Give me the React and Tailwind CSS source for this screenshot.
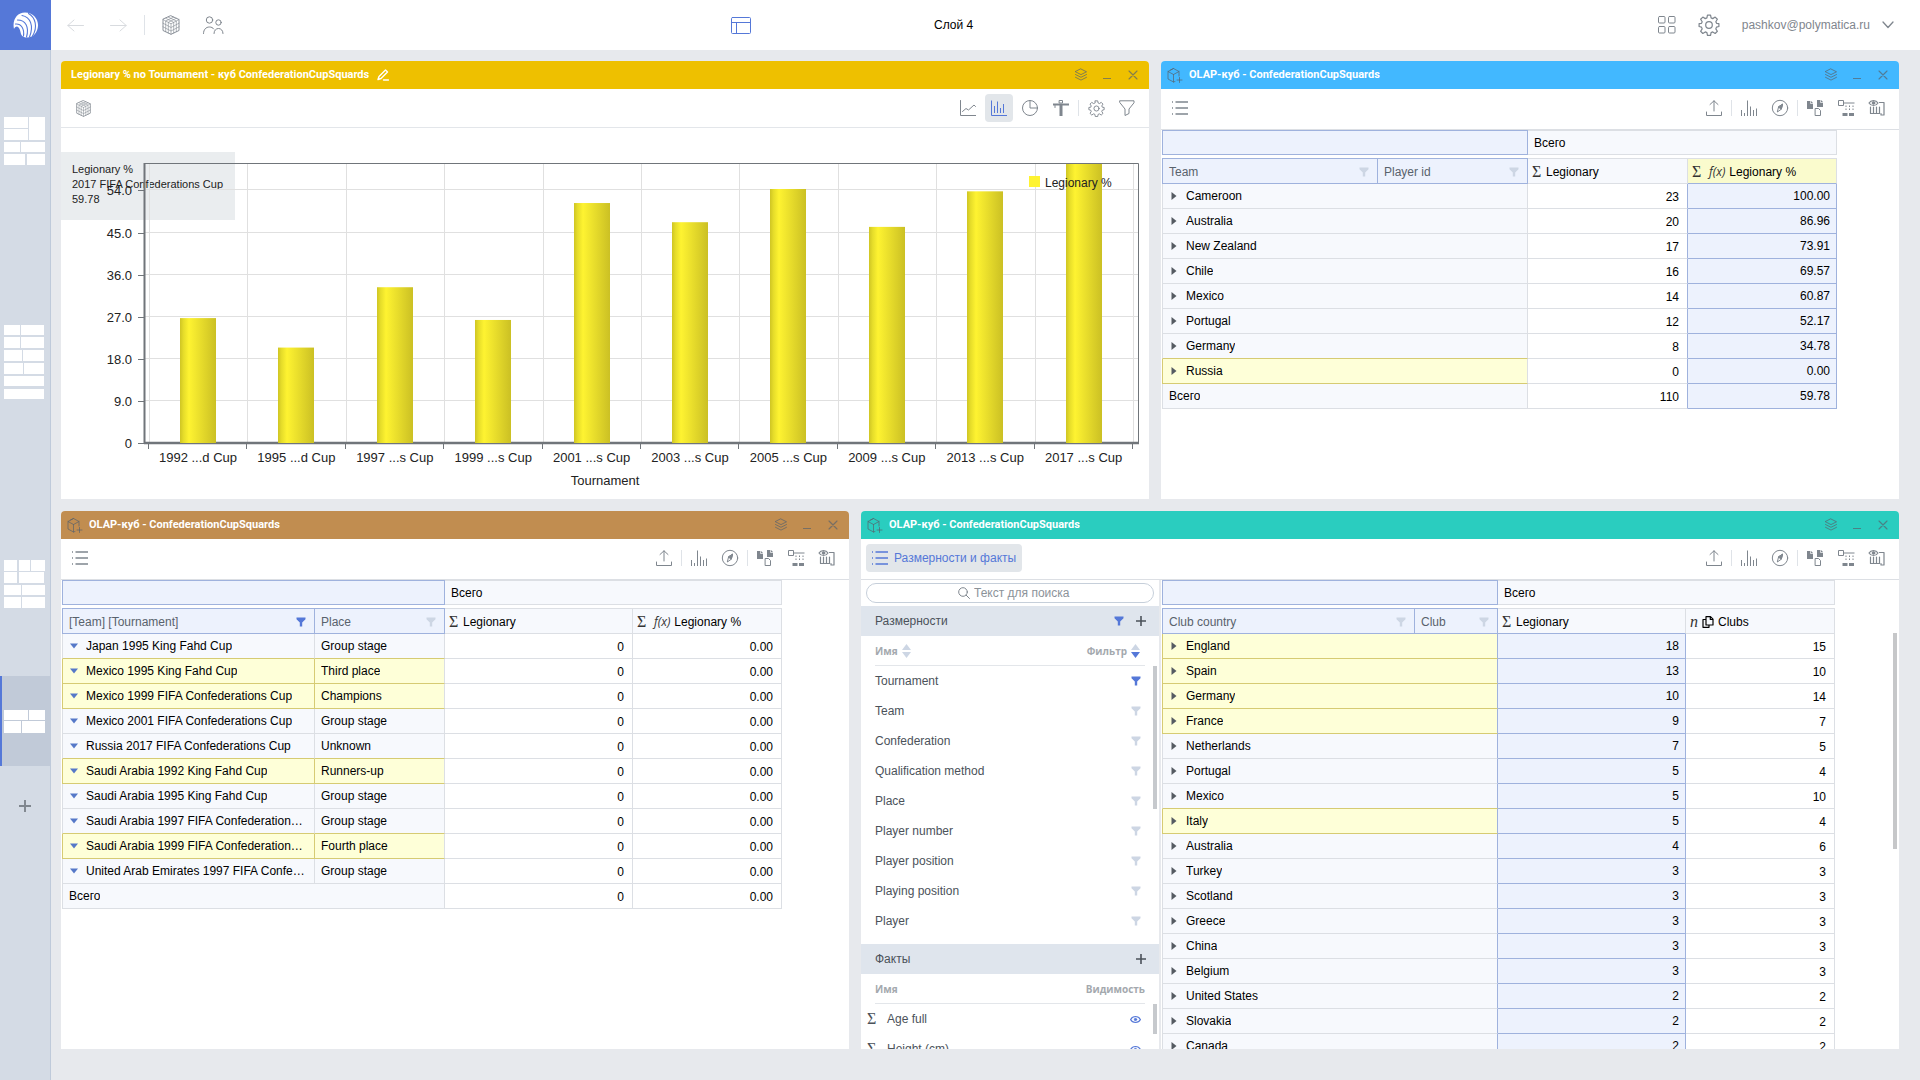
import { useState } from 'react'
import clsx from 'clsx'

const bars = [
  { label: '1992 ...d Cup', value: 26.7 },
  { label: '1995 ...d Cup', value: 20.4 },
  { label: '1997 ...s Cup', value: 33.3 },
  { label: '1999 ...s Cup', value: 26.3 },
  { label: '2001 ...s Cup', value: 51.3 },
  { label: '2003 ...s Cup', value: 47.2 },
  { label: '2005 ...s Cup', value: 54.3 },
  { label: '2009 ...s Cup', value: 46.2 },
  { label: '2013 ...s Cup', value: 53.8 },
  { label: '2017 ...s Cup', value: 59.78 },
]

const teamTable = {
  width: 'w-[675px]',
  cols: ['w-[216px]', 'w-[150px]', 'w-[160px]', 'w-[149px]'],
  dims: [{ label: 'Team' }, { label: 'Player id' }],
  facts: [
    { label: 'Legionary', kind: 'sum' },
    { label: 'Legionary %', kind: 'fx', selected: true, marked: true },
  ],
  rows: [
    { names: ['Cameroon'], values: ['23', '100.00'] },
    { names: ['Australia'], values: ['20', '86.96'] },
    { names: ['New Zealand'], values: ['17', '73.91'] },
    { names: ['Chile'], values: ['16', '69.57'] },
    { names: ['Mexico'], values: ['14', '60.87'] },
    { names: ['Portugal'], values: ['12', '52.17'] },
    { names: ['Germany'], values: ['8', '34.78'] },
    { names: ['Russia'], values: ['0', '0.00'], marked: true },
    { names: ['Всего'], values: ['110', '59.78'], total: true },
  ],
}

const placeTable = {
  open: true,
  width: 'w-[720px]',
  cols: ['w-[253px]', 'w-[130px]', 'w-[188px]', 'w-[149px]'],
  dims: [{ label: '[Team] [Tournament]', filtered: true }, { label: 'Place' }],
  facts: [
    { label: 'Legionary', kind: 'sum' },
    { label: 'Legionary %', kind: 'fx' },
  ],
  rows: [
    { names: ['Japan 1995 King Fahd Cup', 'Group stage'] },
    { names: ['Mexico 1995 King Fahd Cup', 'Third place'], marked: true },
    { names: ['Mexico 1999 FIFA Confederations Cup', 'Champions'], marked: true },
    { names: ['Mexico 2001 FIFA Confederations Cup', 'Group stage'] },
    { names: ['Russia 2017 FIFA Confederations Cup', 'Unknown'] },
    { names: ['Saudi Arabia 1992 King Fahd Cup', 'Runners-up'], marked: true },
    { names: ['Saudi Arabia 1995 King Fahd Cup', 'Group stage'] },
    { names: ['Saudi Arabia 1997 FIFA Confederations Cup', 'Group stage'] },
    { names: ['Saudi Arabia 1999 FIFA Confederations Cup', 'Fourth place'], marked: true },
    { names: ['United Arab Emirates 1997 FIFA Confederations Cup', 'Group stage'] },
    { names: ['Всего'], total: true },
  ].map((row) => ({ ...row, values: ['0', '0.00'] })),
}

const clubTable = {
  width: 'w-[673px]',
  cols: ['w-[253px]', 'w-[83px]', 'w-[188px]', 'w-[149px]'],
  dims: [{ label: 'Club country' }, { label: 'Club' }],
  facts: [
    { label: 'Legionary', kind: 'sum', selected: true },
    { label: 'Clubs', kind: 'count' },
  ],
  rows: [
    { names: ['England'], values: ['18', '15'], marked: true },
    { names: ['Spain'], values: ['13', '10'], marked: true },
    { names: ['Germany'], values: ['10', '14'], marked: true },
    { names: ['France'], values: ['9', '7'], marked: true },
    { names: ['Netherlands'], values: ['7', '5'] },
    { names: ['Portugal'], values: ['5', '4'] },
    { names: ['Mexico'], values: ['5', '10'] },
    { names: ['Italy'], values: ['5', '4'], marked: true },
    { names: ['Australia'], values: ['4', '6'] },
    { names: ['Turkey'], values: ['3', '3'] },
    { names: ['Scotland'], values: ['3', '3'] },
    { names: ['Greece'], values: ['3', '3'] },
    { names: ['China'], values: ['3', '3'] },
    { names: ['Belgium'], values: ['3', '3'] },
    { names: ['United States'], values: ['2', '2'] },
    { names: ['Slovakia'], values: ['2', '2'] },
    { names: ['Canada'], values: ['2', '2'] },
  ],
}

const dimensions = [
  'Tournament',
  'Team',
  'Confederation',
  'Qualification method',
  'Place',
  'Player number',
  'Player position',
  'Playing position',
  'Player',
]

// Each block is [x, y, width, height] inside the layer thumbnail
const layers = [
  {
    name: 'Слой 1',
    tile: 'h-[182px]',
    height: 49,
    blocks: [[0, 0, 24, 11], [0, 12, 24, 11], [25, 0, 16, 23], [0, 25, 16, 10], [17, 25, 24, 10], [0, 37, 21, 11], [23, 37, 18, 11]],
  },
  {
    name: 'Слой 2',
    tile: 'h-[260px]',
    height: 74,
    blocks: [[0, 0, 16, 10], [17, 0, 23, 10], [0, 12, 16, 11], [17, 12, 23, 11], [0, 25, 18, 11], [19, 25, 21, 11], [0, 38, 19, 11], [20, 38, 20, 11], [0, 51, 40, 10], [0, 64, 40, 10]],
  },
  {
    name: 'Слой 3',
    tile: 'h-[184px]',
    height: 48,
    blocks: [[0, 0, 13, 11], [15, 0, 11, 11], [27, 0, 14, 11], [0, 12, 13, 11], [15, 12, 25, 11], [0, 25, 17, 10], [18, 25, 23, 10], [0, 37, 17, 11], [18, 37, 23, 11]],
  },
  {
    name: 'Слой 4',
    tile: 'h-[90px]',
    height: 23,
    blocks: [[0, 0, 24, 10], [25, 0, 16, 10], [0, 11, 17, 12], [18, 11, 23, 12]],
  },
]

function Svg({ size = 16, box = 16, className, children }) {
  return (
    <svg
      width={size}
      height={size}
      viewBox={`0 0 ${box} ${box}`}
      fill="none"
      stroke="currentColor"
      strokeLinecap="round"
      strokeLinejoin="round"
      className={clsx('shrink-0', className)}
      aria-hidden="true"
    >
      {children}
    </svg>
  )
}

function LogoIcon() {
  return (
    <Svg size={26} box={26}>
      <path d="M1 17C-1 8 4 .5 12 .5 20 .5 25.500 7 25 14c-.5 6-4 11.500-11 11.500C9.500 25.500 8 23 7.500 20 7 17 5.500 14.500 4 14.500 2.500 14.500 1.500 15.500 1 17Z" fill="#fff" stroke="none" />
      <path d="M19.500 24C25 15 22.500 5.500 15.500 1.500M16.500 25C21 14 17.500 5 9 3.500M13.500 25C16.500 15 12.500 8 4.500 8M10.500 24C11.500 17 8.500 11.500 2.500 12" stroke="#5578d8" strokeWidth="1.100" />
    </Svg>
  )
}

function CubeIcon({ size = 20 }) {
  return (
    <Svg size={size} box={20}>
      <path d="M10 .8 18 4.500v11L10 19.300 2 15.500v-11Z" strokeWidth=".9" />
      <path
        d="m2 4.500 8 4.300 8-4.300M10 8.800v10.500M12.700 2.100 4.700 6v10.700M15.300 3.300 7.300 7.300V18M7.300 2.100l8 3.900v10.700M4.700 3.300l8 4V18M2 8.200l8 4.300 8-4.300M2 11.800l8 4.200 8-4.200"
        strokeWidth=".6"
      />
    </Svg>
  )
}

function PeopleIcon() {
  return (
    <Svg size={22} box={22}>
      <circle cx="7.500" cy="6" r="3.200" />
      <circle cx="16.500" cy="8.500" r="2.700" />
      <path d="M1.500 19.500c0-4 2.500-6.500 6-6.500 1.800 0 3.300.7 4.300 2M12 19.500c0-3 2-5 4.500-5s4.500 2 4.500 5" />
    </Svg>
  )
}

function GearIcon({ size = 16 }) {
  return (
    <Svg size={size} box={20}>
      <circle cx="10" cy="10" r="3" strokeWidth="1.100" />
      <path
        d="M8.600 1h2.800l.5 2.500 1.500.7 2.200-1.400 2 2-1.400 2.200.7 1.500 2.100.3v2.600l-2.200.6-.6 1.500 1.400 2.200-2 2-2.200-1.400-1.500.6-.5 2.600H8.600l-.5-2.600-1.500-.6-2.200 1.400-2-2 1.400-2.200-.6-1.500L1 11.400V8.800l2.200-.3.6-1.500-1.400-2.200 2-2 2.200 1.400 1.500-.7Z"
        strokeWidth="1.100"
      />
    </Svg>
  )
}

function CubePlusIcon() {
  return (
    <Svg>
      <path d="M8 14.500 6.500 15 1 12V4.500l5.500-3 5.500 3V9M1 4.500l5.500 3 5.500-3M6.500 7.500V15M3.500 3l3-1.500M12.500 10.500v5M10 13h5" />
    </Svg>
  )
}

function StackIcon() {
  return (
    <Svg size={14} box={14}>
      <path d="m7 1 5.500 2.800L7 6.600 1.500 3.800ZM1.500 6.500 7 9.300l5.500-2.800M1.500 9.300 7 12.100l5.500-2.800" />
    </Svg>
  )
}

function CloseIcon() {
  return (
    <Svg size={12} box={12}>
      <path d="m2 2 8 8m0-8-8 8" strokeWidth="1.100" />
    </Svg>
  )
}

function MinimizeIcon() {
  return (
    <Svg size={12} box={12}>
      <path d="M2 9.500h8" strokeLinecap="butt" />
    </Svg>
  )
}

function ListIcon() {
  return (
    <Svg>
      <path d="M3.500 2h12.500M3.500 8h12.500M3.500 14h12.500M0 2h1M0 8h1M0 14h1" strokeWidth="1.500" strokeLinecap="butt" />
    </Svg>
  )
}

function UploadIcon() {
  return (
    <Svg>
      <path d="M8 11V.8M4 4.500 8 .8l4 3.700M.5 12v3.500h15V12" />
    </Svg>
  )
}

function ColumnsIcon() {
  return (
    <Svg size={18} box={18}>
      <path d="M1.500 17V11M4.500 17v-3M7.500 17V1.500M10.500 17V7.500M13.500 17v-6M16.500 17V9.500" strokeLinecap="butt" />
    </Svg>
  )
}

function CompassIcon() {
  return (
    <Svg size={18} box={18}>
      <circle cx="9" cy="9" r="7.700" />
      <path d="m11.500 5.500-1.200 4.700-4 2.800 1.200-4.800Z" />
      <path d="m11.500 5.500-1.200 4.700-2.800-2Z" fill="currentColor" />
    </Svg>
  )
}

function DocsIcon() {
  return (
    <Svg size={18} box={18}>
      <path d="M1 2h4l2 2v6H1ZM11 1h4l2 2v5h-6Z" fill="currentColor" stroke="none" />
      <path d="M9.500 9.500h3l2 2v5h-5Z" />
      <path d="M4.500 2.500v2H7M14.500 1.500v2H17" stroke="#fff" strokeWidth=".7" />
    </Svg>
  )
}

function TreeIcon() {
  return (
    <Svg size={18} box={18}>
      <path d="M1.500 1.500h5v5h-5ZM6.500 4h11" strokeLinecap="butt" />
      <path d="M9 6.500v6M12.500 6.500v6M16 6.500v6" strokeDasharray="1.500 1.500" strokeLinecap="butt" />
      <path d="M5.500 14h5v3h-5ZM12 14h5v3h-5Z" fill="currentColor" stroke="none" />
    </Svg>
  )
}

function EyeColumnsIcon() {
  return (
    <Svg size={18} box={18}>
      <path d="M1 4c2-3.300 7-3.300 9 0-2 3.300-7 3.300-9 0Z" strokeWidth="1.200" />
      <circle cx="5.500" cy="4" r="1.300" fill="currentColor" />
      <path d="M2.500 8v6.500h9V8M5.500 8v6.500M8.500 8v6.500M11.500 3.500h4.500v12.500h-3V14.500" strokeWidth="1.200" />
    </Svg>
  )
}

function LineChartIcon() {
  return (
    <Svg>
      <path d="M.5.500v15H16M2.500 11.500 6 8.500l2.500 1.500L14 5l1.500 1.500" />
    </Svg>
  )
}

function BarChartIcon() {
  return (
    <Svg>
      <path d="M.5.500v15H16M3.500 13V6M6.500 13V1.500M9.500 13V8M12.500 13V4" strokeLinecap="butt" />
    </Svg>
  )
}

function PieIcon() {
  return (
    <Svg size={18} box={18}>
      <circle cx="9" cy="9" r="7.500" />
      <path d="M9 1.500V9h7.500" />
    </Svg>
  )
}

function HammerIcon() {
  return (
    <Svg>
      <path d="M0 4.500h16" strokeWidth="2" strokeLinecap="butt" />
      <path d="M6.500.5h3V3h-3Z" />
      <path d="M6.500 5h3v11h-3Z" fill="currentColor" stroke="none" />
      <path d="M2 5.500v2" />
    </Svg>
  )
}

function FunnelOutlineIcon() {
  return (
    <Svg>
      <path d="M1 .8h14v2L10 9v4.500l-4 2V9L1 2.800Z" />
    </Svg>
  )
}

function FunnelIcon({ active }) {
  return (
    <Svg size={10} box={10} className={active ? 'text-[#5578d8]' : 'text-[#cdd6e4]'}>
      <path d="M.5.500h9v1.800L6.200 5.500V9.500H3.800V5.500L.5 2.300Z" fill="currentColor" stroke="none" />
    </Svg>
  )
}

function PlusIcon({ size = 10 }) {
  return (
    <Svg size={size} box={10}>
      <path d="M5 0v10M0 5h10" strokeWidth="1.600" strokeLinecap="butt" />
    </Svg>
  )
}

function SortIcon({ down }) {
  return (
    <svg width="9" height="14" viewBox="0 0 9 14" aria-hidden="true">
      <path d="M4.500 0 9 6H0Z" fill="#cdd6e4" />
      <path d="M4.500 14 0 8h9Z" fill={down ? '#5578d8' : '#cdd6e4'} />
    </svg>
  )
}

function EyeIcon() {
  return (
    <Svg size={11} box={11} className="text-[#5578d8]">
      <path d="M.6 5.500c2-4 7.800-4 9.800 0-2 4-7.800 4-9.800 0Z" strokeWidth="1.200" />
      <circle cx="5.500" cy="5.500" r="1.200" fill="currentColor" strokeWidth=".8" />
    </Svg>
  )
}

function Separator() {
  return <span className="h-4 w-px bg-[#dfe3e8]" />
}

function ToolButton({ label, active, children }) {
  return (
    <button
      type="button"
      aria-label={label}
      className={clsx(
        'flex size-7 items-center justify-center rounded-sm',
        active ? 'bg-[#e2e6ea] text-[#5578d8]' : 'text-[#7f868e]'
      )}
    >
      {children}
    </button>
  )
}

function Panel({ title, color, size, editable, children }) {
  return (
    <section className={clsx('flex min-w-0 flex-col overflow-hidden rounded-t bg-white', size)}>
      <header className={clsx('flex h-7 shrink-0 items-center pr-2 text-[#59626c]/70', color, editable ? 'pl-2.5' : 'pl-1.5')}>
        {!editable && <CubePlusIcon />}
        <h2 className={clsx('truncate font-[Roboto] text-[11px] font-bold text-white', !editable && 'ml-1.5')}>{title}</h2>
        {editable && (
          <button type="button" aria-label="Переименовать" className="ml-2 text-white">
            <Svg size={12} box={12}>
              <path d="M1 10.500 2 7.500 8.500 1l2 2L4 9.500ZM6.500 11h5" strokeWidth="1.400" />
            </Svg>
          </button>
        )}
        <div className="ml-auto flex gap-2.5">
          <button type="button" aria-label="Слои" className="flex size-4 items-center justify-center"><StackIcon /></button>
          <button type="button" aria-label="Свернуть" className="flex size-4 items-center justify-center"><MinimizeIcon /></button>
          <button type="button" aria-label="Закрыть" className="flex size-4 items-center justify-center"><CloseIcon /></button>
        </div>
      </header>
      {children}
    </section>
  )
}

function CubeToolbar({ listOpen }) {
  return (
    <div className="flex h-[41px] shrink-0 items-center gap-[3px] border-b border-[#dcdfe4] pr-2 pb-0.5 pl-[5px]">
      {listOpen ? (
        <button type="button" className="flex h-7 items-center gap-1.5 rounded-sm bg-[#e2e6ea] px-1.5 text-[#5578d8]">
          <ListIcon />
          Размерности и факты
        </button>
      ) : (
        <ToolButton label="Размерности и факты"><ListIcon /></ToolButton>
      )}
      <div className="ml-auto flex items-center gap-[3px]">
        <ToolButton label="Экспорт"><UploadIcon /></ToolButton>
        <Separator />
        <ToolButton label="Графики"><ColumnsIcon /></ToolButton>
        <ToolButton label="Карта"><CompassIcon /></ToolButton>
        <Separator />
        <ToolButton label="Копии"><DocsIcon /></ToolButton>
        <ToolButton label="Дерево"><TreeIcon /></ToolButton>
        <ToolButton label="Видимость"><EyeColumnsIcon /></ToolButton>
      </div>
    </div>
  )
}

function FactMark({ kind }) {
  if (kind === 'count') {
    return (
      <>
        <span className="font-[Liberation_Serif] text-[16px] text-[#333] italic">n</span>
        <Svg size={12} box={12} className="mx-1">
          <path d="M4 .7h4.500l2.500 2.500v5.800H4ZM8.300.7v2.800H11M4 3.500H1v7.800h6V9" strokeWidth="1.200" />
        </Svg>
      </>
    )
  }
  return (
    <>
      <span className="w-[14px] font-[Liberation_Serif] text-[16px] text-[#333]">Σ</span>
      {kind === 'fx' && <span className="mr-1 ml-[3px] font-[Open_Sans] text-[12px] text-[#333] italic">f(x)</span>}
    </>
  )
}

function PivotTable({ table }) {
  const { width, cols, dims, facts, rows, open } = table

  return (
    <table className={clsx('ml-px table-fixed border-separate border-spacing-0 self-start text-left text-black', width)}>
      <colgroup>
        {cols.map((col, i) => <col key={i} className={col} />)}
      </colgroup>
      <thead>
        <tr className="h-[25px]">
          <td colSpan={2} className="border border-[#9fb2dd] bg-[#edf2fd]" />
          <th colSpan={2} scope="colgroup" className="border-y border-r border-[#dcdfe4] bg-[#f7f9fd] px-1.5 py-0 font-normal">Всего</th>
        </tr>
        <tr className="h-[3px]"><td colSpan={4} /></tr>
        <tr className="h-[26px]">
          {dims.map((dim, i) => (
            <th key={dim.label} scope="col" className={clsx('border-y border-r border-[#9fb2dd] bg-[#edf2fd] py-0 pr-2 pl-1.5 font-normal text-[#59626c]', i === 0 && 'border-l')}>
              <div className="flex h-6 items-center justify-between pt-px">
                {dim.label}
                <button type="button" aria-label={`Фильтр ${dim.label}`}><FunnelIcon active={dim.filtered} /></button>
              </div>
            </th>
          ))}
          {facts.map((fact) => (
            <th
              key={fact.label}
              scope="col"
              className={clsx(
                'border-t border-r border-b border-t-[#dcdfe4] border-r-[#dcdfe4] px-1 py-0 font-normal',
                fact.marked ? 'bg-[#fafbcd]' : 'bg-[#f7f9fd]',
                fact.selected ? 'border-b-[#9fb2dd]' : 'border-b-[#dcdfe4]'
              )}
            >
              <div className="flex h-6 items-center pt-px">
                <FactMark kind={fact.kind} />
                {fact.label}
              </div>
            </th>
          ))}
        </tr>
      </thead>
      <tbody>
        {rows.map((row, r) => {
          const nextMarked = rows[r + 1] && rows[r + 1].marked
          const nameCell = clsx(
            'border-r border-b py-0 pl-1.5 font-normal',
            row.marked ? 'bg-[#feffd8]' : 'bg-[#f7f9fd]',
            row.marked || nextMarked ? 'border-b-[#d6cb73]' : 'border-b-[#dcdfe4]'
          )
          return (
            <tr key={row.names[0]} className="h-[25px]">
              {row.names.map((name, i) => (
                <th
                  key={name}
                  scope="row"
                  colSpan={row.names.length === 1 ? 2 : 1}
                  className={clsx(
                    nameCell,
                    i === 0 && 'border-l',
                    row.marked ? 'border-l-[#d6cb73]' : 'border-l-[#dcdfe4]',
                    row.marked && i === 0 && row.names.length > 1 ? 'border-r-[#d6cb73]' : facts[0].selected ? 'border-r-[#9fb2dd]' : 'border-r-[#dcdfe4]'
                  )}
                >
                  <div className="flex items-center pr-2">
                    {i === 0 && !row.total && (
                      <button type="button" aria-label={`Раскрыть ${name}`} className="mr-1 ml-px flex w-3 shrink-0">
                        <svg width="8" height="8" viewBox="0 0 8 8" aria-hidden="true">
                          {open ? <path d="M0 1.500h8L4 6.500Z" fill="#5578c8" /> : <path d="M1.500 0 6.500 4l-5 4Z" fill="#555b62" />}
                        </svg>
                      </button>
                    )}
                    <span className="truncate">{name}</span>
                  </div>
                </th>
              ))}
              {row.values.map((value, i) => (
                <td
                  key={i}
                  className={clsx(
                    'border-r border-b text-right',
                    facts[i].selected ? 'border-[#9fb2dd] bg-[#edf2fd] py-0 pr-1.5' : 'border-b-[#dcdfe4] bg-white pt-0.5 pr-2 pb-0',
                    !facts[i].selected && (facts[i + 1] && facts[i + 1].selected ? 'border-r-[#9fb2dd]' : 'border-r-[#dcdfe4]')
                  )}
                >
                  {value}
                </td>
              ))}
            </tr>
          )
        })}
      </tbody>
    </table>
  )
}

function BarChart() {
  const step = 98.4
  const zero = 315
  const unit = 42.1 / 9
  const ticks = [0, 9, 18, 27, 36, 45, 54]

  return (
    <svg viewBox="0 0 1088 371" className="relative h-full w-full font-[Liberation_Sans] text-[13px]" role="img" aria-label="Legionary % no Tournament">
      <defs>
        <linearGradient id="bar">
          <stop offset="0" stopColor="#cfc524" />
          <stop offset=".1" stopColor="#e6dd2a" />
          <stop offset=".25" stopColor="#fef331" />
          <stop offset="1" stopColor="#cbc024" />
        </linearGradient>
        <clipPath id="plot"><rect x="83" y="36" width="995" height="279" /></clipPath>
      </defs>
      {ticks.map((tick) => {
        const y = Math.round(zero - tick * unit) - 0.5
        return (
          <g key={tick}>
            <path d={`M84 ${y}H1077`} stroke="#e0e0e0" />
            <path d={`M77 ${y + 1}h6`} stroke="#70757a" />
            <text x="71" y={y + 5} textAnchor="end" fill="#222">{tick === 0 ? '0' : tick.toFixed(1)}</text>
          </g>
        )
      })}
      {[...bars, null].map((bar, i) => (
        <g key={i}>
          <path d={`M${Math.round(88 + i * step) + 0.5} 36V315`} stroke="#e0e0e0" />
          <path d={`M${Math.round(87 + i * step) + 0.5} 316v5`} stroke="#70757a" />
        </g>
      ))}
      <path d="M83 35.500H1077.500V315" fill="none" stroke="#70757a" />
      <path d="M83.500 35V316" stroke="#70757a" strokeWidth="2" />
      <path d="M83 315H1078" stroke="#70757a" strokeWidth="2.500" />
      {bars.map((bar, i) => (
        <g key={bar.label}>
          <rect x={Math.round(119 + i * step)} y={zero - bar.value * unit} width="36" height={bar.value * unit} fill="url(#bar)" clipPath="url(#plot)" />
          <text x={137 + i * step} y="334" textAnchor="middle" fill="#222">{bar.label}</text>
        </g>
      ))}
      <text x="544" y="357" textAnchor="middle" fill="#222">Tournament</text>
      <rect x="968" y="48" width="11" height="11" fill="#fef331" />
      <text x="984" y="59" className="text-[12px]" fill="#222">Legionary %</text>
    </svg>
  )
}

function ChartPanel() {
  return (
    <Panel title="Legionary % no Tournament - куб ConfederationCupSquards" color="bg-[#eec000]" size="flex-[1088_1_0%]" editable>
      <div className="flex h-[39px] shrink-0 items-center gap-[3px] border-b border-[#e3e6ea] px-2">
        <ToolButton label="Куб"><CubeIcon size={17} /></ToolButton>
        <div className="ml-auto flex items-center gap-[3px]">
          <ToolButton label="Линейный график"><LineChartIcon /></ToolButton>
          <ToolButton label="Столбцы" active><BarChartIcon /></ToolButton>
          <ToolButton label="Круговая диаграмма"><PieIcon /></ToolButton>
          <ToolButton label="Инструменты"><HammerIcon /></ToolButton>
          <Separator />
          <ToolButton label="Настройки"><GearIcon size={17} /></ToolButton>
          <ToolButton label="Фильтр"><FunnelOutlineIcon /></ToolButton>
        </div>
      </div>
      <div className="relative min-h-0 flex-1">
        {/* the hover card stays under the axes and their labels */}
        <div className="absolute top-6 left-0 h-[68px] w-[174px] bg-[#eaedef] px-[11px] py-2.5 text-[11px] leading-[15px] text-[#222]">
          <p>Legionary %</p>
          <p>2017 FIFA Confederations Cup</p>
          <p>59.78</p>
        </div>
        <BarChart />
      </div>
    </Panel>
  )
}

function SectionTitle({ children, filter }) {
  return (
    <div className="flex h-[30px] shrink-0 items-center bg-[#dfe5ed] pr-[13px] pl-3.5 text-[#4b525a]">
      <h3>{children}</h3>
      <div className="ml-auto flex items-center gap-3">
        {filter && <button type="button" aria-label="Фильтр"><FunnelIcon active /></button>}
        <button type="button" aria-label={`Добавить: ${children}`}><PlusIcon /></button>
      </div>
    </div>
  )
}

function FieldList() {
  const [query, setQuery] = useState('')
  const found = dimensions.filter((name) => name.toLowerCase().includes(query.toLowerCase()))

  return (
    <aside className="flex w-[300px] shrink-0 flex-col overflow-hidden border-r-2 border-[#e7e9ed] text-[#4b525a]">
      <label className="mx-[5px] mt-[3px] mb-[3px] flex h-5 shrink-0 items-center justify-center gap-1 rounded-full border border-[#c6cfda] pl-2 text-[#7f868e]">
        <Svg size={12} box={12}>
          <circle cx="5" cy="5" r="4.300" />
          <path d="m8.200 8.200 3.300 3.300" />
        </Svg>
        <input
          type="text"
          value={query}
          onChange={(e) => setQuery(e.target.value)}
          placeholder="Текст для поиска"
          aria-label="Текст для поиска"
          className="w-24 outline-none placeholder:text-[#8b9299]"
        />
      </label>

      <SectionTitle filter>Размерности</SectionTitle>
      <div className="mx-3.5 flex h-[30px] shrink-0 items-center border-b border-[#e3e6ea] font-[Open_Sans] text-[10px] font-bold text-[#a4a9ae]">
        <button type="button" className="flex items-center gap-1">Имя <SortIcon /></button>
        <button type="button" className="mr-[5px] ml-auto flex items-center gap-1">Фильтр <SortIcon down /></button>
      </div>
      <div className="relative mb-2 shrink-0">
        <ul>
          {found.map((name) => (
            <li key={name} className="flex h-[30px] items-center justify-between pr-[18px] pl-3.5">
              {name}
              <button type="button" aria-label={`Фильтр ${name}`}><FunnelIcon active={name === 'Tournament'} /></button>
            </li>
          ))}
        </ul>
        <span className="absolute top-0 right-0.5 h-[143px] w-1 bg-[#c6c9cd]" />
      </div>

      <SectionTitle>Факты</SectionTitle>
      <div className="mx-3.5 flex h-[30px] shrink-0 items-center justify-between border-b border-[#e3e6ea] font-[Open_Sans] text-[10px] font-bold text-[#a4a9ae]">
        <span>Имя</span>
        <span>Видимость</span>
      </div>
      <div className="relative shrink-0">
        <ul>
          {['Age full', 'Height (cm)'].map((name) => (
            <li key={name} className="flex h-[30px] items-center pr-[18px] pl-1.5">
              <span className="w-5 font-[Liberation_Serif] text-[16px]">Σ</span>
              {name}
              <button type="button" aria-label={`Видимость ${name}`} className="ml-auto"><EyeIcon /></button>
            </li>
          ))}
        </ul>
        <span className="absolute top-0 right-0.5 h-[30px] w-1 bg-[#c6c9cd]" />
      </div>
    </aside>
  )
}

function TopBar() {
  return (
    <header className="flex h-[50px] shrink-0 items-center bg-white text-[#7f868e]">
      <a href="#home" aria-label="Polymatica" className="flex h-full w-[51px] shrink-0 items-center justify-center bg-[#5578d8]">
        <LogoIcon />
      </a>
      <div className="flex flex-[664_1_0%] items-center pl-4">
        <button type="button" aria-label="Назад" className="text-[#d8dbdf]">
          <Svg size={17} box={17}><path d="M16.500 8.500H.8M7 3 .8 8.500 7 14" /></Svg>
        </button>
        <button type="button" aria-label="Вперёд" className="ml-[26px] text-[#d8dbdf]">
          <Svg size={17} box={17}><path d="M.5 8.500h15.700M10 3l6.200 5.500L10 14" /></Svg>
        </button>
        <span className="mr-4 ml-[17px] h-5 w-px bg-[#dfe3e8]" />
        <button type="button" aria-label="Кубы"><CubeIcon size={20} /></button>
        <button type="button" aria-label="Пользователи" className="ml-[21px]"><PeopleIcon /></button>
      </div>
      <button type="button" aria-label="Раскладка" className="text-[#5578d8]">
        <Svg size={21} box={21}><rect x="1.500" y="2.500" width="19" height="16" rx="1" /><path d="M1.500 7.500h19M6.500 7.500v11" /></Svg>
      </button>
      <h1 className="flex-[406_1_0%] text-center text-black">Слой 4</h1>
      <div className="flex flex-[739_1_0%] items-center justify-end pr-[26px]">
        <button type="button" aria-label="Модули">
          <Svg size={18} box={18}>
            <rect x=".5" y=".5" width="6.500" height="6.500" rx="1" />
            <rect x="10.500" y=".5" width="6.500" height="6.500" rx="1" />
            <rect x=".5" y="10.500" width="6.500" height="6.500" rx="1" />
            <rect x="10.500" y="10.500" width="6.500" height="6.500" rx="1" />
          </Svg>
        </button>
        <button type="button" aria-label="Настройки" className="ml-[22px]"><GearIcon size={22} /></button>
        <button type="button" className="ml-[22px] flex items-center gap-3">
          pashkov@polymatica.ru
          <Svg size={12} box={12}><path d="m1 3 5 5.500L11 3" strokeWidth="1.300" /></Svg>
        </button>
      </div>
    </header>
  )
}

function LayerBar() {
  return (
    <nav aria-label="Слои" className="flex w-[51px] shrink-0 flex-col border-r border-[#bfcada] bg-[#d4dbe5]">
      {layers.map((layer, i) => (
        <button
          key={layer.name}
          type="button"
          aria-label={layer.name}
          className={clsx(
            'flex shrink-0 items-center border-l-2 pl-0.5',
            layer.tile,
            i === 3 ? 'border-[#5578d8] bg-[#c1cad8]' : 'border-transparent'
          )}
        >
          <svg width="41" height={layer.height} fill="#fff" aria-hidden="true">
            {layer.blocks.map(([x, y, w, h]) => <rect key={`${x}-${y}`} x={x} y={y} width={w} height={h} />)}
          </svg>
        </button>
      ))}
      <button type="button" aria-label="Добавить слой" className="flex h-20 items-center justify-center text-[#7f868e]">
        <PlusIcon size={12} />
      </button>
    </nav>
  )
}

function App() {
  return (
    <div className="flex h-screen flex-col overflow-hidden bg-[#e7e9ed] font-[Liberation_Sans,Arial,sans-serif] text-[12px] leading-4">
      <TopBar />
      <div className="flex min-h-0 flex-1">
        <LayerBar />
        <main className="flex min-w-0 flex-1 flex-col gap-3 pt-[11px] pr-[21px] pb-[31px] pl-2.5">
          <div className="flex min-h-0 flex-[438_1_0%] gap-3">
            <ChartPanel />
            <Panel title="OLAP-куб - ConfederationCupSquards" color="bg-[#42b8ff]" size="flex-[738_1_0%]">
              <CubeToolbar />
              <PivotTable table={teamTable} />
            </Panel>
          </div>
          <div className="flex min-h-0 flex-[538_1_0%] gap-3">
            <Panel title="OLAP-куб - ConfederationCupSquards" color="bg-[#c18d50]" size="flex-[788_1_0%]">
              <CubeToolbar />
              <PivotTable table={placeTable} />
            </Panel>
            <Panel title="OLAP-куб - ConfederationCupSquards" color="bg-[#2acdbf]" size="flex-[1038_1_0%]">
              <CubeToolbar listOpen />
              <div className="relative flex min-h-0 flex-1">
                <FieldList />
                <PivotTable table={clubTable} />
                <span className="absolute top-[53px] right-0.5 h-[216px] w-1 bg-[#c6c7c9]" />
              </div>
            </Panel>
          </div>
        </main>
      </div>
    </div>
  )
}

export default App
